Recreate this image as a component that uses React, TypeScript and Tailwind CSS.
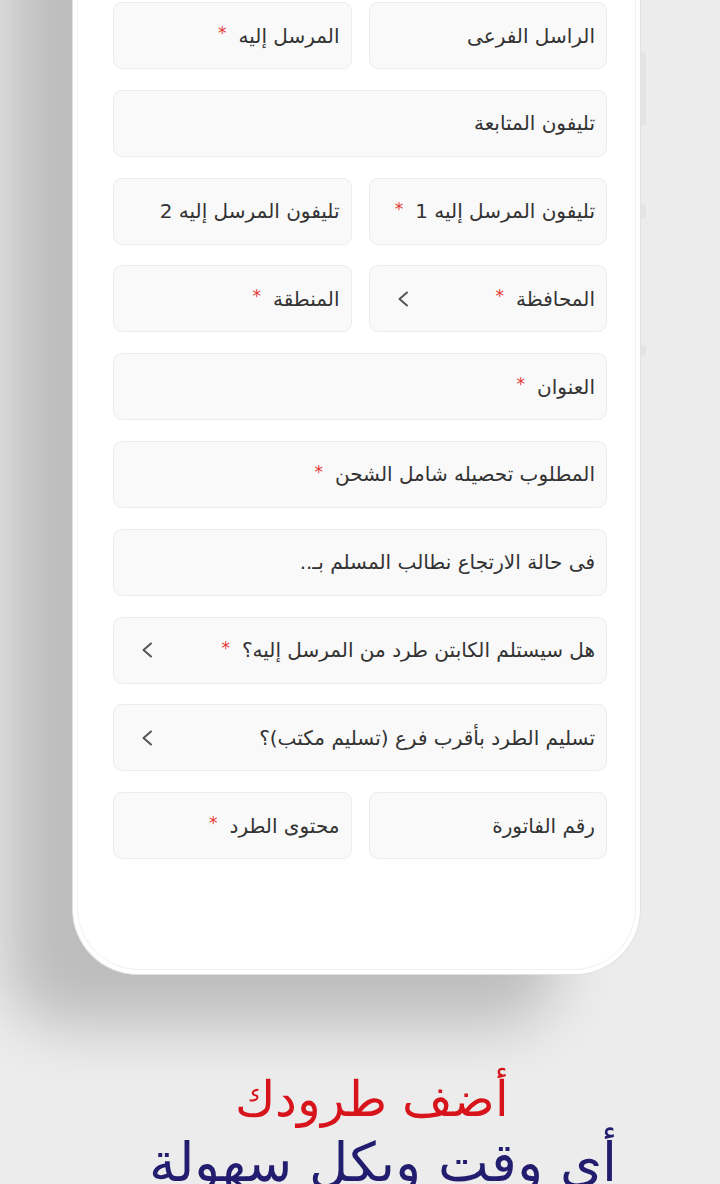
import type { ReactNode } from "react";

const fontStack = { fontFamily: '"DejaVu Sans", "Noto Sans", sans-serif' };

const Chevron = () => (
  <svg width="12" height="16" viewBox="0 0 12 16" fill="none" className="shrink-0">
    <polyline points="10,1.5 2.5,8 10,14.5" stroke="#555555" strokeWidth="2" strokeLinecap="round" strokeLinejoin="round" />
  </svg>
);

type FieldProps = {
  label: string;
  required?: boolean;
  select?: boolean;
  className?: string;
};

const Field = ({ label, required, select, className }: FieldProps) => (
  <div
    className={`flex h-[67px] items-center rounded-[9px] border border-[#ececec] bg-[#f9f9f9] pl-[27px] pr-[11px] ${className ?? ""}`}
  >
    <span className="whitespace-nowrap text-[20px] text-[#333333]">{label}</span>
    {required && <span className="mr-3 -mt-1 text-[17px] leading-none text-[#e53935]">*</span>}
    {select && (
      <span className="mr-auto">
        <Chevron />
      </span>
    )}
  </div>
);

const Row = ({ children }: { children: ReactNode }) => (
  <div className="grid grid-cols-2 gap-[17px]">{children}</div>
);

export default function App() {
  return (
    <div className="relative h-[1184px] w-[720px] overflow-hidden bg-[#ececec]" style={fontStack}>
      {/* phone, its top runs above the viewport */}
      <div className="relative -mt-[200px] ml-[72px] h-[1175px] w-[569px] rounded-b-[66px] border border-t-0 border-[#e2e2e2] bg-white shadow-[-75px_60px_60px_-10px_rgba(0,0,0,0.2)]">
        <div className="absolute -right-[6px] top-[252px] h-[74px] w-[5px] rounded-r bg-[#e4e4e4]" />
        <div className="absolute -right-[6px] top-[404px] h-[14px] w-[5px] rounded-r bg-[#e4e4e4]" />
        <div className="absolute -right-[6px] top-[545px] h-[11px] w-[5px] rounded-r bg-[#e4e4e4]" />

        <div className="mx-[4px] h-[1170px] rounded-b-[62px] border border-t-0 border-[#f1f1f1]">
          <div dir="rtl" className="flex flex-col gap-[20.8px] pl-[35px] pr-[28px] pt-[202px]">
            <Row>
              <Field label="الراسل الفرعى" />
              <Field label="المرسل إليه" required />
            </Row>
            <Field label="تليفون المتابعة" />
            <Row>
              <Field label="تليفون المرسل إليه 1" required />
              <Field label="تليفون المرسل إليه 2" />
            </Row>
            <Row>
              <Field label="المحافظة" required select />
              <Field label="المنطقة" required />
            </Row>
            <Field label="العنوان" required />
            <Field label="المطلوب تحصيله شامل الشحن" required />
            <Field label="فى حالة الارتجاع نطالب المسلم بـ.." />
            <Field label="هل سيستلم الكابتن طرد من المرسل إليه؟" required select />
            <Field label="تسليم الطرد بأقرب فرع (تسليم مكتب)؟" select />
            <Row>
              <Field label="رقم الفاتورة" />
              <Field label="محتوى الطرد" required />
            </Row>
          </div>
        </div>
      </div>

      {/* caption */}
      <div dir="rtl" className="flex flex-col items-center pt-[94px] text-center">
        <p className="pl-[24px] text-[49px] font-light leading-[62px] text-[#d7141c]">أضف طرودك</p>
        <p className="pl-[46px] text-[54px] font-light leading-[64px] text-[#221d6e]">أي وقت وبكل سهولة</p>
      </div>
    </div>
  );
}
